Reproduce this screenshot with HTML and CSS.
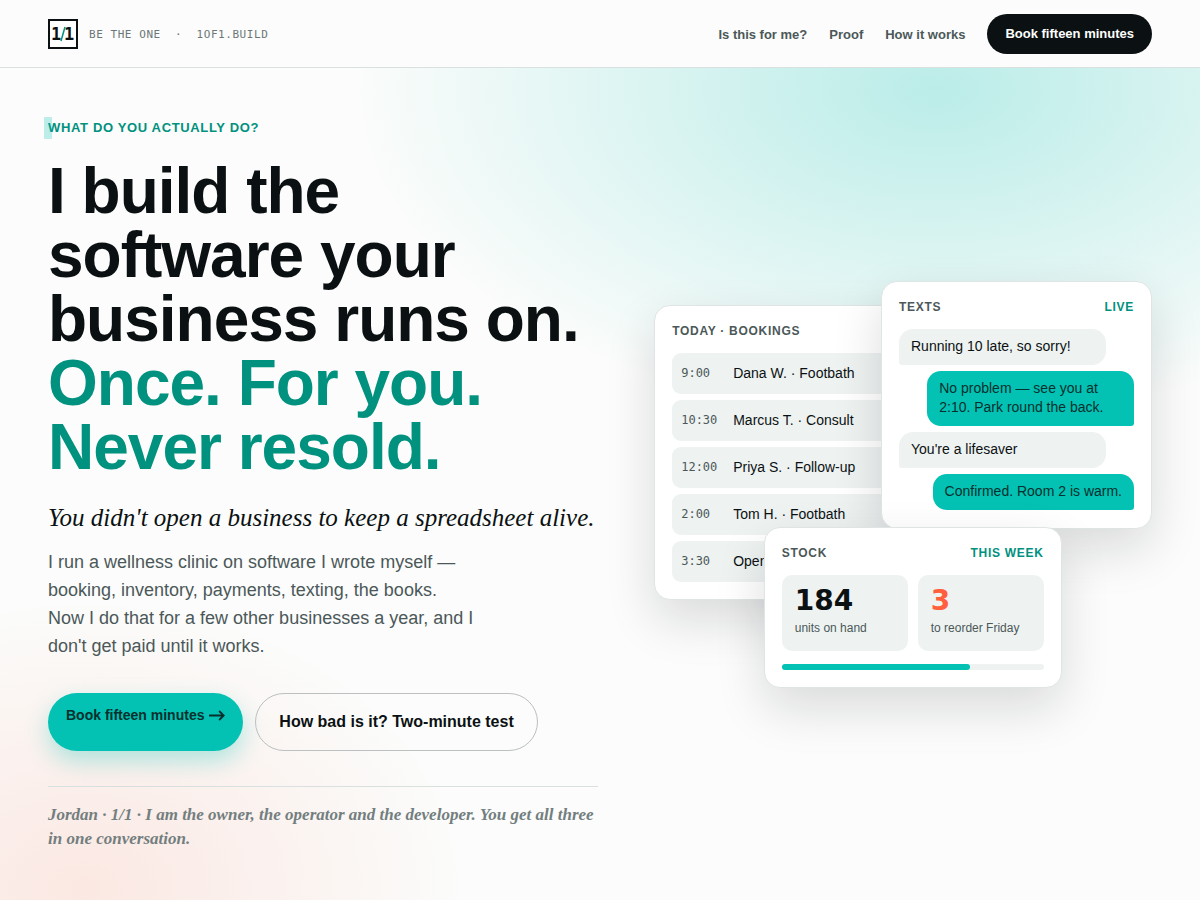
FILE: index.html
```html
<!DOCTYPE html>
<html lang="en">
<head>
    <meta charset="UTF-8">
    <meta name="viewport" content="width=device-width, initial-scale=1.0">
    <title>1/1 - Be the one</title>
    <link rel="stylesheet" href="styles.css">
</head>
<body>
    <header class="site-header">
        <a class="brand" href="#">
            <svg class="logo" viewBox="0 0 30 30" aria-label="1/1">
                <rect x="1" y="1" width="28" height="28" fill="#fff" stroke="#0b1112" stroke-width="2"/>
                <text x="3" y="21">1</text>
                <text x="16" y="21">1</text>
                <path d="M13 22 L17 8" stroke="#00917f" stroke-width="1.500"/>
            </svg>
            <span class="tagline">BE THE ONE&nbsp; ·&nbsp; 1OF1.BUILD</span>
        </a>
        <nav class="nav">
            <a href="#fit">Is this for me?</a>
            <a href="#proof">Proof</a>
            <a href="#how">How it works</a>
            <a class="btn btn-dark" href="#book">Book fifteen minutes</a>
        </nav>
    </header>

    <main class="hero">
        <section class="intro">
            <p class="eyebrow">What do you actually do?</p>
            <h1>I build the<br>software your<br>business runs on.<br><span>Once. For you.<br>Never resold.</span></h1>
            <p class="hook">You didn't open a business to keep a spreadsheet alive.</p>
            <p class="lead">I run a wellness clinic on software I wrote myself — booking, inventory, payments, texting, the books.<br>Now I do that for a few other businesses a year, and I don't get paid until it works.</p>
            <div class="actions">
                <a class="btn btn-teal" href="#book">Book fifteen minutes
                    <svg class="arrow" viewBox="0 0 15 12" aria-hidden="true"><path d="M0 6h14M9.500 1.800l4.300 4.200l-4.300 4.200" fill="none" stroke="currentColor" stroke-width="1.700"/></svg>
                </a>
                <a class="btn-outline" href="#test">How bad is it? Two-minute test</a>
            </div>
            <p class="signature">Jordan · 1/1 · I am the owner, the operator and the developer. You get all three in one conversation.</p>
        </section>

        <!-- overlapping cards -->
        <section class="stage">
            <article class="card bookings">
                <div class="card-head"><h2>Today · Bookings</h2></div>
                <ul>
                    <li><time>9:00</time>Dana W. · Footbath</li>
                    <li><time>10:30</time>Marcus T. · Consult</li>
                    <li><time>12:00</time>Priya S. · Follow-up</li>
                    <li><time>2:00</time>Tom H. · Footbath</li>
                    <li><time>3:30</time>Open</li>
                </ul>
            </article>

            <article class="card texts">
                <div class="card-head"><h2>Texts</h2><strong>Live</strong></div>
                <div class="thread">
                    <p class="msg">Running 10 late, so sorry!</p>
                    <p class="msg me">No problem — see you at 2:10. Park round the back.</p>
                    <p class="msg">You're a lifesaver</p>
                    <p class="msg me">Confirmed. Room 2 is warm.</p>
                </div>
            </article>

            <article class="card stock">
                <div class="card-head"><h2>Stock</h2><strong>This week</strong></div>
                <div class="tiles">
                    <div class="tile"><b>184</b>units on hand</div>
                    <div class="tile low"><b>3</b>to reorder Friday</div>
                </div>
                <div class="bar"><div class="bar-fill" style="width: 72%"></div></div>
            </article>
        </section>
    </main>
</body>
</html>
```
FILE: styles.css
```css
:root {
    --ink: #0b1112;
    --muted: #4b5859;
    --teal: #03c1b3;
    --teal-dark: #00917f;
    --line: #d9e0e0;
    --tile: #eef2f1;
    --paper: #fbfcfb;
}

* {
    box-sizing: border-box;
}

body {
    margin: 0;
    min-height: 100vh;
    font-family: "Liberation Sans", Arial, sans-serif;
    color: var(--ink);
    background:
        radial-gradient(580px 330px at 78% 90px, rgba(3, 193, 179, .26), rgba(3, 193, 179, .13) 50%, transparent),
        radial-gradient(380px 290px at 7% 890px, rgba(255, 95, 60, .13), transparent),
        var(--paper);
}

h1, h2, p, ul {
    margin: 0;
    padding: 0;
}

a {
    color: inherit;
    text-decoration: none;
}

/* header */
.site-header {
    display: flex;
    justify-content: space-between;
    align-items: center;
    padding: 14px 48px 13px;
    background: var(--paper);
    border-bottom: 1px solid var(--line);
}

.brand {
    display: flex;
    align-items: center;
    gap: 11px;
}

.logo {
    width: 30px;
    height: 30px;
}

.logo text {
    font: bold 17px "DejaVu Sans Mono", monospace;
    fill: var(--ink);
}

.tagline {
    font: 11px "DejaVu Sans Mono", monospace;
    letter-spacing: .05em;
    color: #6c7778;
}

.nav {
    display: flex;
    align-items: center;
    gap: 22px;
    font-size: 13px;
    font-weight: bold;
    color: var(--muted);
}

.btn {
    padding: 12px 18px;
    border-radius: 29px;
    line-height: 16px;
    font-weight: bold;
}

.btn-dark {
    background: var(--ink);
    color: #fff;
}

/* hero */
.hero {
    display: grid;
    grid-template-columns: 21fr 19fr;
    gap: 56px;
    align-items: center;
    padding: 49px 48px;
}

.eyebrow {
    position: relative;
    margin-bottom: 20px;
    font-size: 13px;
    line-height: 22px;
    font-weight: bold;
    letter-spacing: .05em;
    text-transform: uppercase;
    color: var(--teal-dark);
}

.eyebrow::before {
    content: "";
    position: absolute;
    left: -4px;
    top: 0;
    width: 8px;
    height: 22px;
    background: rgba(3, 193, 179, .25);
}

h1 {
    font-size: 64px;
    line-height: 64px;
    letter-spacing: -1px;
}

h1 span {
    color: var(--teal-dark);
}

.hook {
    margin-top: 22px;
    font: italic 25px/34px "Liberation Serif", serif;
}

.lead {
    max-width: 440px;
    margin-top: 13px;
    font-size: 18px;
    line-height: 28px;
    color: var(--muted);
}

.actions {
    display: flex;
    gap: 12px;
    margin-top: 33px;
}

.btn-teal {
    padding-top: 14px;
    font-size: 14px;
    background: var(--teal);
    color: #06302d;
    box-shadow: 0 10px 24px rgba(3, 193, 179, .3);
}

.arrow {
    width: 16px;
    height: 13px;
    margin-left: 1px;
    vertical-align: -2px;
}

.btn-outline {
    padding: 18px 23px;
    border: 1px solid #bcc0c0;
    border-radius: 29px;
    font-size: 16px;
    line-height: 20px;
    font-weight: bold;
}

.signature {
    margin-top: 35px;
    padding-top: 16px;
    border-top: 1px solid var(--line);
    font: italic bold 17px/24px "Liberation Serif", serif;
    color: #737e7f;
}

/* cards share one grid cell so they can overlap */
.stage {
    display: grid;
    min-height: 407px;
}

.card {
    grid-area: 1 / 1;
    padding: 17px;
    background: #fff;
    border: 1px solid #dfe5e4;
    border-radius: 16px;
    box-shadow: 0 20px 50px rgba(11, 17, 18, .14);
}

.card-head {
    display: flex;
    justify-content: space-between;
    margin-bottom: 13px;
    font-size: 12px;
    line-height: 17px;
    letter-spacing: .06em;
    text-transform: uppercase;
}

.card-head h2 {
    font-size: inherit;
    color: var(--muted);
}

.card-head strong {
    color: var(--teal-dark);
}

.bookings {
    align-self: start;
    width: 62%;
    margin-top: 24px;
}

.bookings ul {
    display: grid;
    gap: 6px;
    list-style: none;
}

.bookings li {
    display: flex;
    align-items: center;
    padding: 10px 9px;
    font-size: 14px;
    line-height: 21px;
    background: var(--tile);
    border-radius: 9px;
}

.bookings time {
    width: 52px;
    font: 12px "DejaVu Sans Mono", monospace;
    color: var(--muted);
}

.texts {
    place-self: start end;
    width: 271px;
}

.thread {
    display: flex;
    flex-direction: column;
    gap: 6px;
    padding-bottom: 1px;
}

.msg {
    width: 88%;
    padding: 8px 12px 9px;
    font-size: 14px;
    line-height: 19px;
    background: var(--tile);
    border-radius: 14px 14px 14px 3px;
}

.msg.me {
    align-self: flex-end;
    width: auto;
    max-width: 88%;
    background: var(--teal);
    color: #06302d;
    border-radius: 14px 14px 3px 14px;
}

.stock {
    align-self: end;
    width: 298px;
    margin-left: 22%;
}

.tiles {
    display: grid;
    grid-template-columns: 1fr 1fr;
    gap: 10px;
}

.tile {
    padding: 10px 13px 14px;
    font-size: 12px;
    line-height: 18px;
    color: var(--muted);
    background: var(--tile);
    border-radius: 10px;
}

.tile b {
    display: block;
    margin-bottom: 2px;
    font: bold 28px/32px "DejaVu Sans", sans-serif;
    color: var(--ink);
}

.tile.low b {
    color: #ff5f3c;
}

.bar {
    height: 6px;
    margin-top: 13px;
    background: var(--tile);
    border-radius: 3px;
}

.bar-fill {
    height: 6px;
    background: var(--teal);
    border-radius: 3px;
}

@media (max-width: 900px) {
    .hero {
        grid-template-columns: 1fr;
    }
}
```
